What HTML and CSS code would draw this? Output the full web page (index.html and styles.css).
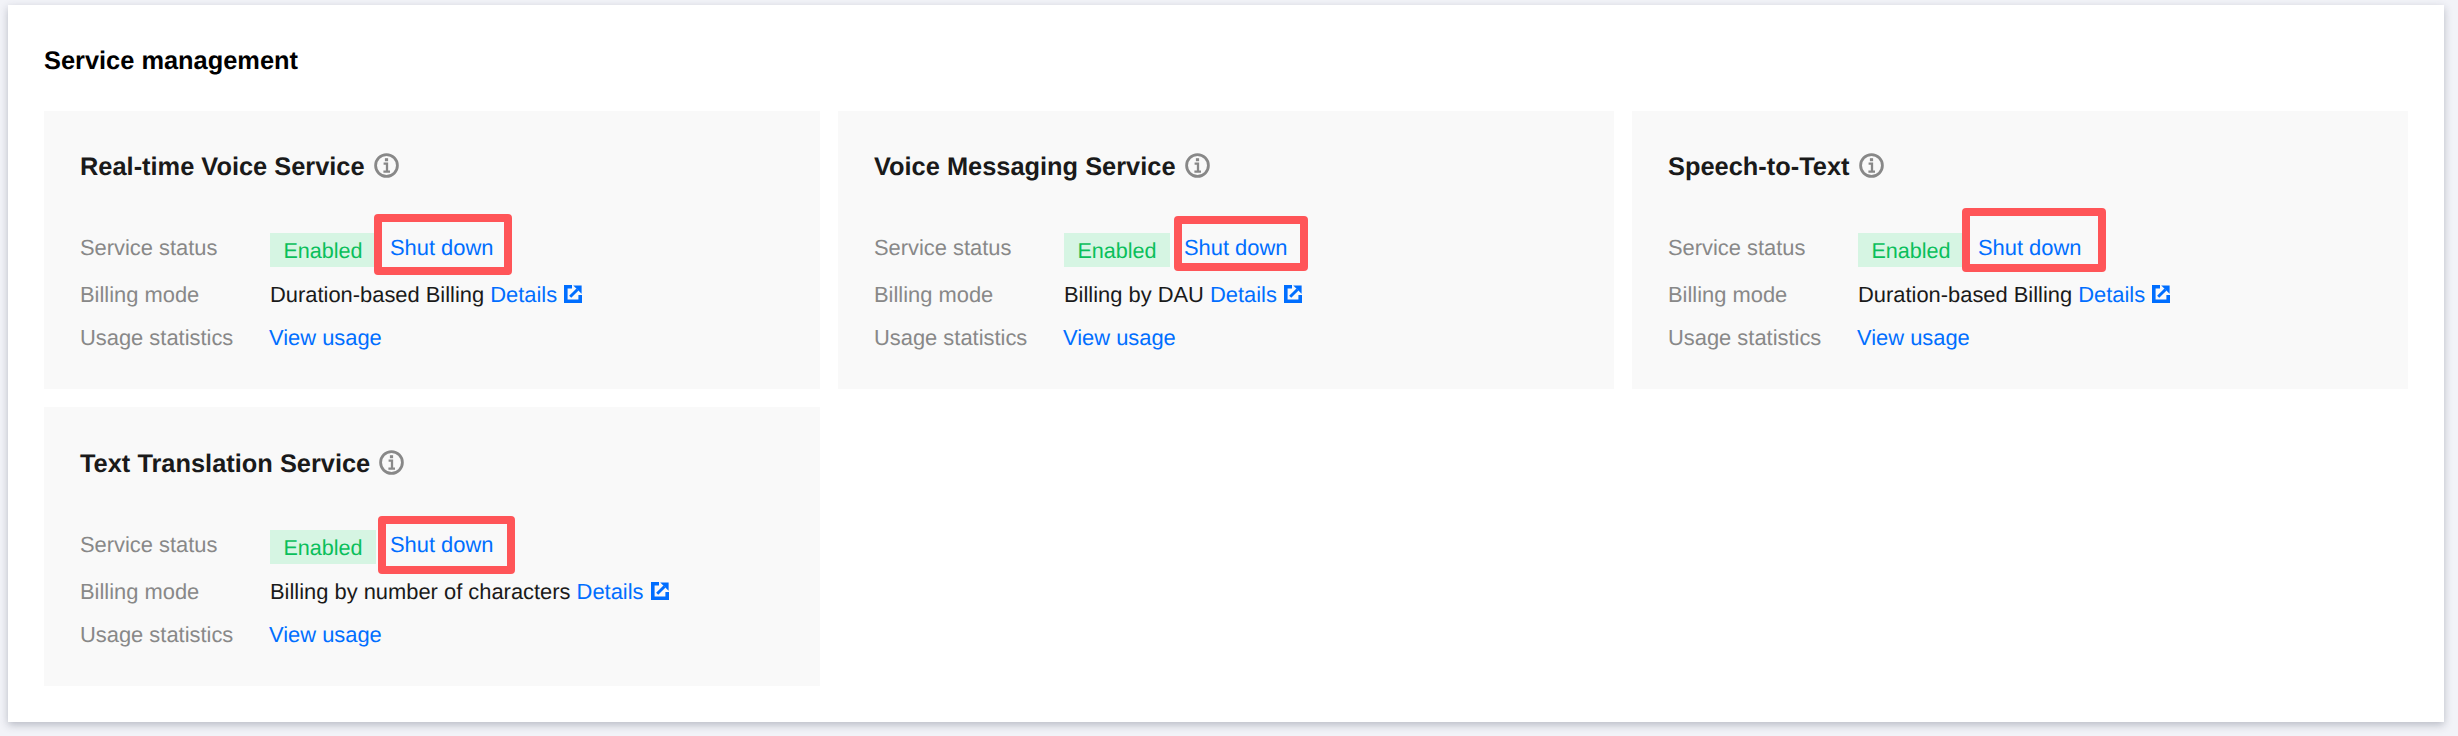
FILE: index.html
```html
<!DOCTYPE html>
<html lang="en">
<head>
<meta charset="utf-8">
<title>Service management</title>
<link rel="stylesheet" href="styles.css">
</head>
<body>
<svg class="defs" width="0" height="0" aria-hidden="true">
  <symbol id="info" viewBox="0 0 25 25">
    <circle cx="12.5" cy="12.5" r="10.9" fill="none" stroke="#888" stroke-width="2.8"/>
    <rect x="10.9" y="5.2" width="3.2" height="3" fill="#888"/>
    <path d="M9.6 10.6h3.4v8M9.4 18.7h6.6" fill="none" stroke="#888" stroke-width="2.3"/>
  </symbol>
  <symbol id="ext" viewBox="0 0 18 18">
    <path d="M8 1.8H1.8v14.4h14.4V10" fill="none" stroke="#006eff" stroke-width="3.6"/>
    <path d="M6.2 11.8 13.5 4.5" fill="none" stroke="#006eff" stroke-width="3"/>
    <path d="M9.2 0.4H17.6V8.8Z" fill="#006eff"/>
  </symbol>
</svg>
<main class="panel">
  <h1 class="heading">Service management</h1>
  <div class="grid">
    <section class="card">
      <h2 class="card-title">Real-time Voice Service <svg class="info"><use href="#info"/></svg></h2>
      <div class="row"><span class="label">Service status</span><span class="value"><span class="tag">Enabled</span><a class="link shut">Shut down<span class="mark mark-a"></span></a></span></div>
      <div class="row"><span class="label">Billing mode</span><span class="value">Duration-based Billing <a class="link">Details</a><svg class="ext"><use href="#ext"/></svg></span></div>
      <div class="row"><span class="label">Usage statistics</span><span class="value"><a class="link usage">View usage</a></span></div>
    </section>
    <section class="card">
      <h2 class="card-title">Voice Messaging Service <svg class="info"><use href="#info"/></svg></h2>
      <div class="row"><span class="label">Service status</span><span class="value"><span class="tag">Enabled</span><a class="link shut">Shut down<span class="mark mark-b"></span></a></span></div>
      <div class="row"><span class="label">Billing mode</span><span class="value">Billing by DAU <a class="link">Details</a><svg class="ext"><use href="#ext"/></svg></span></div>
      <div class="row"><span class="label">Usage statistics</span><span class="value"><a class="link usage">View usage</a></span></div>
    </section>
    <section class="card">
      <h2 class="card-title">Speech-to-Text <svg class="info"><use href="#info"/></svg></h2>
      <div class="row"><span class="label">Service status</span><span class="value"><span class="tag">Enabled</span><a class="link shut">Shut down<span class="mark mark-c"></span></a></span></div>
      <div class="row"><span class="label">Billing mode</span><span class="value">Duration-based Billing <a class="link">Details</a><svg class="ext"><use href="#ext"/></svg></span></div>
      <div class="row"><span class="label">Usage statistics</span><span class="value"><a class="link usage">View usage</a></span></div>
    </section>
    <section class="card card-low">
      <h2 class="card-title">Text Translation Service <svg class="info"><use href="#info"/></svg></h2>
      <div class="row"><span class="label">Service status</span><span class="value"><span class="tag">Enabled</span><a class="link shut">Shut down<span class="mark mark-d"></span></a></span></div>
      <div class="row"><span class="label">Billing mode</span><span class="value">Billing by number of characters <a class="link">Details</a><svg class="ext"><use href="#ext"/></svg></span></div>
      <div class="row"><span class="label">Usage statistics</span><span class="value"><a class="link usage">View usage</a></span></div>
    </section>
  </div>
</main>
</body>
</html>
```
FILE: styles.css
```css
* { box-sizing: border-box; }
html, body { margin: 0; }
body {
  background: #f2f3f8;
  font-family: "Liberation Sans", Arial, sans-serif;
  font-size: 21.9px;
  line-height: 30px;
  color: #1a1a1a;
  text-rendering: geometricPrecision;
}
.defs { position: absolute; }
.panel {
  margin: 5px 14px 14px 8px;
  padding: 36px;
  background: #fff;
  box-shadow: 0 3px 8px rgba(54, 58, 80, 0.3);
}
.heading {
  margin: 0 0 30px;
  font-size: 25.4px;
  line-height: 40px;
  font-weight: 700;
  color: #000;
}
.grid {
  display: grid;
  grid-template-columns: repeat(3, 1fr);
  gap: 18px;
  align-items: start;
}
.card {
  padding: 36px;
  background: #f9f9f9;
}
.card-low { padding-top: 37px; }
.card-title {
  display: flex;
  align-items: center;
  margin: 0 0 46px;
  font-size: 25.4px;
  line-height: 40px;
  font-weight: 700;
  white-space: pre-wrap;
  color: #1a1a1a;
}
.info {
  width: 25px;
  height: 25px;
  margin-left: 2px;
  margin-top: -3px;
}
.row {
  display: flex;
  align-items: flex-start;
  margin-bottom: 13px;
}
.row:last-child { margin-bottom: 0; }
.label {
  flex: 0 0 190px;
  color: #888;
}
.value {
  display: flex;
  align-items: flex-start;
  white-space: pre-wrap;
}
.tag {
  width: 106px;
  height: 34px;
  font-size: 21.6px;
  line-height: 35px;
  text-align: center;
  background: #d6f5e3;
  color: #0abf5b;
}
.link {
  color: #006eff;
}
.usage { margin-left: -1px; }
.shut {
  position: relative;
  margin-left: 14px;
}
.ext {
  width: 18px;
  height: 18px;
  margin: 5px 0 0 7px;
}
.mark {
  position: absolute;
  border: 8px solid #ff5558;
  border-radius: 4px;
}
.mark-a { left: -16px; top: -19px; width: 138px; height: 61px; }
.mark-b { left: -10px; top: -17px; width: 134px; height: 55px; }
.mark-c { left: -16px; top: -25px; width: 144px; height: 64px; }
.mark-d { left: -12px; top: -14px; width: 137px; height: 58px; }
```
